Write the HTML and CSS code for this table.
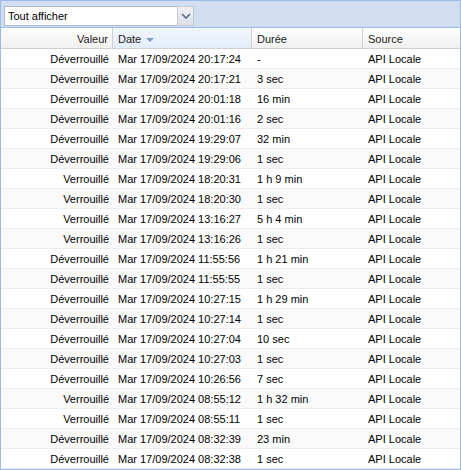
FILE: index.html
```html
<!DOCTYPE html>
<html lang="fr">
<head>
<meta charset="utf-8">
<link rel="stylesheet" href="styles.css">
</head>
<body>
<div class="panel">
  <div class="toolbar">
    <div class="combo">
      <span class="combo-text">Tout afficher</span>
      <span class="combo-btn"><svg width="10" height="6" viewBox="0 0 10 6"><path d="M1 1 L5 5 L9 1" fill="none" stroke="#5a6a80" stroke-width="1.6"/></svg></span>
    </div>
  </div>
  <div class="grid">
    <div class="hrow">
      <div class="hc c1 right">Valeur</div>
      <div class="hc c2 sorted">Date <span class="sort"></span></div>
      <div class="hc c3">Durée</div>
      <div class="hc c4">Source</div>
    </div>
    <div class="rows" id="rows"></div>
  </div>
</div>
<script src="app.js"></script>
</body>
</html>
```
FILE: app.js
```js
const data = [
["Déverrouillé","Mar 17/09/2024 20:17:24","-"],
["Déverrouillé","Mar 17/09/2024 20:17:21","3 sec"],
["Déverrouillé","Mar 17/09/2024 20:01:18","16 min"],
["Déverrouillé","Mar 17/09/2024 20:01:16","2 sec"],
["Déverrouillé","Mar 17/09/2024 19:29:07","32 min"],
["Déverrouillé","Mar 17/09/2024 19:29:06","1 sec"],
["Verrouillé","Mar 17/09/2024 18:20:31","1 h 9 min"],
["Verrouillé","Mar 17/09/2024 18:20:30","1 sec"],
["Verrouillé","Mar 17/09/2024 13:16:27","5 h 4 min"],
["Verrouillé","Mar 17/09/2024 13:16:26","1 sec"],
["Déverrouillé","Mar 17/09/2024 11:55:56","1 h 21 min"],
["Déverrouillé","Mar 17/09/2024 11:55:55","1 sec"],
["Déverrouillé","Mar 17/09/2024 10:27:15","1 h 29 min"],
["Déverrouillé","Mar 17/09/2024 10:27:14","1 sec"],
["Déverrouillé","Mar 17/09/2024 10:27:04","10 sec"],
["Déverrouillé","Mar 17/09/2024 10:27:03","1 sec"],
["Déverrouillé","Mar 17/09/2024 10:26:56","7 sec"],
["Verrouillé","Mar 17/09/2024 08:55:12","1 h 32 min"],
["Verrouillé","Mar 17/09/2024 08:55:11","1 sec"],
["Déverrouillé","Mar 17/09/2024 08:32:39","23 min"],
["Déverrouillé","Mar 17/09/2024 08:32:38","1 sec"]
];
const rows = document.getElementById("rows");
data.forEach((d, i) => {
  const r = document.createElement("div");
  r.className = "row" + (i % 2 ? " alt" : "");
  r.innerHTML = `<div class="c c1 right">${d[0]}</div><div class="c c2">${d[1]}</div><div class="c c3">${d[2]}</div><div class="c c4">API Locale</div>`;
  rows.appendChild(r);
});
```
FILE: styles.css
```css
* { box-sizing: border-box; }
html, body { margin: 0; padding: 0; background: #fff; }
body { font-family: "Liberation Sans", Arial, sans-serif; font-size: 11px; color: #000; }
.panel { width: 461px; height: 470px; border: 1px solid #99bbe8; overflow: hidden; }
.toolbar { height: 27px; background: #d0def0; border-bottom: 1px solid #99bbe8; padding: 5px 0 0 3px; }
.combo { width: 190px; height: 20px; display: flex; border: 1px solid #b5b8c8; border-right: none; background: #fff; }
.combo-text { flex: 1; font-size: 11px; line-height: 18px; padding-left: 3px; }
.combo-btn { width: 17px; height: 20px; margin-top: -1px; background: linear-gradient(#eef0f4, #dde1e8); border: 1px solid #c5cad4; display: flex; align-items: center; justify-content: center; }
.hrow { display: flex; height: 21px; background: linear-gradient(#ffffff, #f0f0f0); border-bottom: 1px solid #d0d0d0; }
.hc { line-height: 20px; padding: 1px 4px 0 5px; border-right: 1px solid #d0d0d0; color: #222; white-space: nowrap; }
.hc.sorted { background: linear-gradient(#f1f6fd, #e3edf9); }
.sort { display: inline-block; width: 0; height: 0; border-left: 4px solid transparent; border-right: 4px solid transparent; border-top: 4px solid #7e9cc8; vertical-align: middle; margin-left: 2px; }
.c1 { width: 112px; }
.c2 { width: 139px; }
.c3 { width: 111px; }
.c4 { flex: 1; border-right: none; }
.right { text-align: right; }
.row { display: flex; height: 20px; border-bottom: 1px solid #ededed; background: #fff; }
.row.alt { background: #fafafa; }
.c { line-height: 18px; padding: 1px 4px 0 5px; white-space: nowrap; overflow: hidden; }
```
